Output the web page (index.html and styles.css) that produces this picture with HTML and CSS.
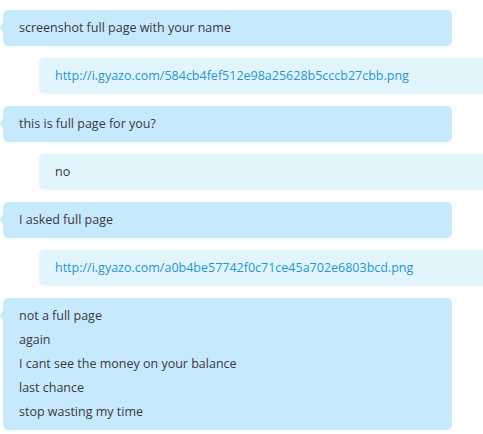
FILE: index.html
```html
<!DOCTYPE html>
<html>
<head>
  <meta charset="UTF-8">
  <title>Chat</title>
  <link rel="stylesheet" href="styles.css">
</head>
<body>
  <div class="chat">
    <div class="msg in">
      <p>screenshot full page with your name</p>
    </div>
    <div class="msg out">
      <p><a href="#">http://i.gyazo.com/584cb4fef512e98a25628b5cccb27cbb.png</a></p>
    </div>
    <div class="msg in">
      <p>this is full page for you?</p>
    </div>
    <div class="msg out">
      <p>no</p>
    </div>
    <div class="msg in">
      <p>I asked full page</p>
    </div>
    <div class="msg out">
      <p><a href="#">http://i.gyazo.com/a0b4be57742f0c71ce45a702e6803bcd.png</a></p>
    </div>
    <div class="msg in">
      <p>not a full page</p>
      <p>again</p>
      <p>I cant see the money on your balance</p>
      <p>last chance</p>
      <p>stop wasting my time</p>
    </div>
  </div>
</body>
</html>
```

FILE: styles.css
```css
body {
  margin: 0;
  background-color: white;
  font-family: 'Open Sans', 'DejaVu Sans', sans-serif;
  font-size: 12.5px;
  color: #3a3648;
}
.chat {
  display: flex;
  flex-direction: column;
  gap: 12px;
  padding: 10px 0 0 3px;
}
.msg {
  position: relative;
  padding: 6px 16px;
  border-radius: 5px;
}
.msg p {
  margin: 0;
  line-height: 24px;
}
.in {
  background-color: #c6eafb;
  margin-right: 31px;
}
.in::before {
  content: '';
  position: absolute;
  left: -3px;
  top: 12px;
  border-top: 5px solid transparent;
  border-bottom: 5px solid transparent;
  border-right: 3px solid #c6eafb;
}
.out {
  background-color: #e3f5fc;
  margin-left: 36px;
  border-radius: 5px 0 0 5px;
}
.out a {
  color: #1c97d4;
  text-decoration: none;
}
```
